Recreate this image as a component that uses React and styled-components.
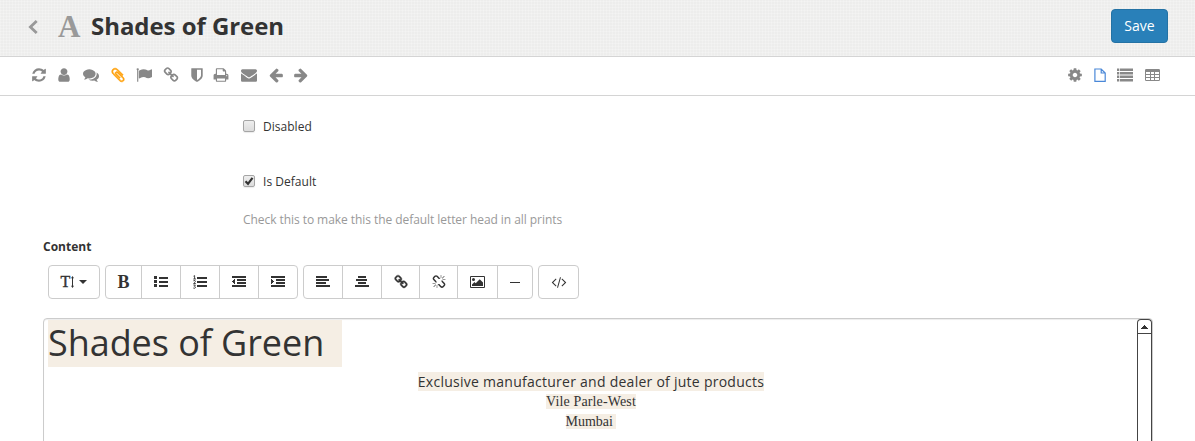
import React from "react";
import styled, { createGlobalStyle } from "styled-components";

const Global = createGlobalStyle`
  * { box-sizing: border-box; }
  body { margin: 0; background: #fff; color: #333; font: 12px/17px "Open Sans", sans-serif; overflow: hidden; }
`;

const paths = {
  refresh: "M1639 1056q0 5-1 7-64 268-268 434.5t-478 166.5q-146 0-282.5-55t-243.5-157l-129 129q-19 19-45 19t-45-19-19-45v-448q0-26 19-45t45-19h448q26 0 45 19t19 45-19 45l-137 137q71 66 161 102t187 36q134 0 250-65t186-179q11-17 53-117 8-23 30-23h192q13 0 22.5 9.5t9.5 22.5zm25-800v448q0 26-19 45t-45 19h-448q-26 0-45-19t-19-45 19-45l138-138q-148-137-349-137-134 0-250 65t-186 179q-11 17-53 117-8 23-30 23h-199q-13 0-22.5-9.5t-9.5-22.5v-7q65-268 270-434.5t480-166.5q146 0 284 55.5t245 156.5l130-129q19-19 45-19t45 19 19 45z",
  user: "M1536 1399q0 109-62.5 187t-150.5 78h-854q-88 0-150.5-78t-62.5-187q0-85 8.5-160.5t31.5-152 58.5-131 94-89 134.5-34.5q131 128 313 128t313-128q76 0 134.5 34.5t94 89 58.5 131 31.5 152 8.5 160.5zm-256-887q0 159-112.5 271.5t-271.5 112.5-271.5-112.5-112.5-271.5 112.5-271.5 271.5-112.5 271.5 112.5 112.5 271.5z",
  comments: "M1408 768q0 139-94 257t-256.5 186.5-353.5 68.5q-86 0-176-16-124 88-278 128-36 9-86 16h-3q-11 0-20.5-8t-11.5-21q-1-3-1-6.5t.5-6.5 2-6l2.5-5 3.5-5.5 4-5 4.5-5 4-4.5q5-6 23-25t26-29.5 22.5-29 25-38.5 20.5-44q-124-72-195-177t-71-224q0-139 94-257t256.5-186.5 353.5-68.5 353.5 68.5 256.5 186.5 94 257zm384 256q0 120-71 224.5t-195 176.5q10 24 20.5 44t25 38.5 22.5 29 26 29.5 23 25q1 1 4 4.5t4.5 5 4 5 3.5 5.5l2.5 5 2 6 .5 6.5-1 6.5q-3 14-13 22t-22 7q-50-7-86-16-154-40-278-128-90 16-176 16-271 0-472-132 58 4 88 4 161 0 309-45t264-129q125-92 192-212t67-254q0-77-23-152 129 71 204 178t75 230z",
  clip: "M1596 1385q0 117-79 196t-196 79q-135 0-235-100l-777-776q-113-115-113-271 0-159 110-270t269-111q158 0 273 113l605 606q10 10 10 22 0 16-30.5 46.5t-46.5 30.5q-13 0-23-10l-606-607q-79-77-181-77-106 0-179 75t-73 181q0 105 76 181l776 777q63 63 145 63 64 0 106-42t42-106q0-82-63-145l-581-581q-26-24-60-24-29 0-48 19t-19 48q0 32 25 59l410 410q10 10 10 22 0 16-31 47t-47 31q-12 0-22-10l-410-410q-63-61-63-149 0-82 57-139t139-57q88 0 149 63l581 581q100 98 100 235z",
  flag: "M320 256q0 72-64 110v1266q0 13-9.5 22.5t-22.5 9.5h-64q-13 0-22.5-9.5t-9.5-22.5v-1266q-64-38-64-110 0-53 37.5-90.5t90.5-37.5 90.5 37.5 37.5 90.5zm1472 64v763q0 25-12.5 38.5t-39.5 27.5q-215 116-369 116-61 0-123.5-22t-108.5-48-115.5-48-142.5-22q-192 0-464 146-17 9-33 9-26 0-45-19t-19-45v-742q0-32 31-55 21-14 79-43 236-120 421-120 107 0 200 29t219 88q38 19 88 19 54 0 117.5-21t110-47 88-47 54.5-21q26 0 45 19t19 45z",
  link: "M1520 1216q0-40-28-68l-208-208q-28-28-68-28-42 0-72 32 3 3 19 18.5t21.5 21.5 15 19 13 25.5 3.5 27.5q0 40-28 68t-68 28q-15 0-27.5-3.5t-25.5-13-19-15-21.5-21.5-18.5-19q-33 31-33 73 0 40 28 68l206 207q27 27 68 27 40 0 68-26l147-146q28-28 28-67zm-703-705q0-40-28-68l-206-207q-28-28-68-28-39 0-68 27l-147 146q-28 28-28 67 0 40 28 68l208 208q27 27 68 27 42 0 72-31-3-3-19-18.5t-21.5-21.5-15-19-13-25.5-3.5-27.5q0-40 28-68t68-28q15 0 27.5 3.5t25.5 13 19 15 21.5 21.5 18.5 19q33-31 33-73zm895 705q0 120-85 203l-147 146q-83 83-203 83-121 0-204-85l-206-207q-83-83-83-203 0-123 88-209l-88-88q-86 88-208 88-120 0-204-84l-208-208q-84-84-84-204t85-203l147-146q83-83 203-83 121 0 204 85l206 207q83 83 83 203 0 123-88 209l88 88q86-88 208-88 120 0 204 84l208 208q84 84 84 204z",
  shield: "M1344 960v-640h-448v1137q119-63 213-137 235-184 235-360zm192-768v768q0 86-33.5 170.5t-83 150-118 127.5-126.5 103-121 77.5-89.5 49.5-42.5 20q-12 6-26 6t-26-6q-16-7-42.5-20t-89.5-49.5-121-77.5-126.5-103-118-127.5-83-150-33.5-170.5v-768q0-26 19-45t45-19h1152q26 0 45 19t19 45z",
  print: "M448 1536h896v-256h-896v256zm0-640h896v-384h-160q-40 0-68-28t-28-68v-160h-640v640zm1152 64q0-26-19-45t-45-19-45 19-19 45 19 45 45 19 45-19 19-45zm128 0v416q0 13-9.5 22.5t-22.5 9.5h-224v160q0 40-28 68t-68 28h-960q-40 0-68-28t-28-68v-160h-224q-13 0-22.5-9.5t-9.5-22.5v-416q0-79 56.5-135.5t135.5-56.5h64v-544q0-40 28-68t68-28h672q40 0 88 20t76 48l152 152q28 28 48 76t20 88v256h64q79 0 135.5 56.5t56.5 135.5z",
  envelope: "M1792 710v794q0 66-47 113t-113 47h-1472q-66 0-113-47t-47-113v-794q44 49 101 87 362 246 497 345 57 42 92.5 65.5t94.5 48 110 24.5h2q51 0 110-24.5t94.5-48 92.5-65.5q170-123 498-345 57-39 100-87zm0-294q0 79-49 151t-122 123q-376 261-468 325-10 7-42.5 31t-54 38-52 32.5-57.5 27-50 9h-2q-23 0-50-9t-57.5-27-52-32.5-54-38-42.5-31q-91-64-262-182.5t-205-142.5q-62-42-117-115.5t-55-136.5q0-78 41.5-130t118.5-52h1472q65 0 112.5 47t47.5 113z",
  arrow: "M1664 896v128q0 53-32.5 90.5t-84.5 37.5h-704l293 294q38 36 38 90t-38 90l-75 76q-37 37-90 37-52 0-91-37l-651-652q-37-37-37-90 0-52 37-91l651-650q38-38 91-38 52 0 90 38l75 74q38 38 38 91t-38 91l-293 293h704q52 0 84.5 37.5t32.5 90.5z",
  cog: "M1152 896q0-106-75-181t-181-75-181 75-75 181 75 181 181 75 181-75 75-181zm512-109v222q0 12-8 23t-20 13l-185 28q-19 54-39 91 35 50 107 138 10 12 10 25t-9 23q-27 37-99 108t-94 71q-12 0-26-9l-138-108q-44 23-91 38-16 136-29 186-7 28-36 28h-222q-14 0-24.5-8.5t-11.5-21.5l-28-184q-49-16-90-37l-141 107q-10 9-25 9-14 0-25-11-126-114-165-168-7-10-7-23 0-12 8-23 15-21 51-66.5t54-70.5q-27-50-41-99l-183-27q-13-2-21-12.5t-8-23.5v-222q0-12 8-23t19-13l186-28q14-46 39-92-40-57-107-138-10-12-10-24 0-10 9-23 26-36 98.5-107.5t94.5-71.5q13 0 26 10l138 107q44-23 91-38 16-136 29-186 7-28 36-28h222q14 0 24.5 8.5t11.5 21.5l28 184q49 16 90 37l142-107q9-9 24-9 13 0 25 10 129 119 165 170 7 8 7 22 0 12-8 23-15 21-51 66.5t-54 70.5q26 50 41 98l183 28q13 2 21 12.5t8 23.5z",
  unlink: "M503 1271l-256 256q-10 9-23 9-12 0-23-9-9-10-9-23t9-23l256-256q10-9 23-9t23 9q9 10 9 23t-9 23zm169 41v320q0 14-9 23t-23 9-23-9-9-23v-320q0-14 9-23t23-9 23 9 9 23zm-224-224q0 14-9 23t-23 9h-320q-14 0-23-9t-9-23 9-23 23-9h320q14 0 23 9t9 23zm1264 128q0 120-85 203l-147 146q-83 83-203 83-121 0-204-85l-334-335q-21-21-42-56l239-18 273 274q28 28 68 27.5t68-27.5l147-146q28-28 28-67 0-40-28-68l-274-275 18-239q35 21 56 42l336 336q84 86 84 204zm-617-724l-239 18-273-274q-28-28-68-28-39 0-68 27l-147 146q-28 28-28 67 0 40 28 68l274 274-18 240q-35-21-56-42l-336-336q-84-86-84-204 0-120 85-203l147-146q83-83 203-83 121 0 204 85l334 335q21 21 42 56zm633 84q0 14-9 23t-23 9h-320q-14 0-23-9t-9-23 9-23 23-9h320q14 0 23 9t9 23zm-544-544v320q0 14-9 23t-23 9-23-9-9-23v-320q0-14 9-23t23-9 23 9 9 23zm407 151l-256 256q-11 9-23 9t-23-9q-9-10-9-23t9-23l256-256q10-9 23-9t23 9q9 10 9 23t-9 23z",
  code: "M681 1399l-50 50q-10 10-23 10t-23-10l-466-466q-10-10-10-23t10-23l466-466q10-10 23-10t23 10l50 50q10 10 10 23t-10 23l-393 393 393 393q10 10 10 23t-10 23zm591-1067l-373 1291q-4 13-15.5 19.5t-23.5 2.5l-62-17q-13-4-19.5-15.5t-2.5-24.5l373-1291q4-13 15.5-19.5t23.5-2.5l62 17q13 4 19.5 15.5t2.5 24.5zm657 651l-466 466q-10 10-23 10t-23-10l-50-50q-10-10-10-23t10-23l393-393-393-393q-10-10-10-23t10-23l50-50q10-10 23-10t23 10l466 466q10 10 10 23t-10 23z",
};

const Svg = styled.svg`
  display: block;
  flex: none;
  fill: currentColor;
  overflow: visible;
  transform: ${(p) => (p.$flip ? "scaleX(-1)" : "none")};
`;

const Glyph = ({ name, size = 16, flip, w = 1792, weight = 0 }) => (
  <Svg width={(size * w) / 1792} height={size} viewBox={`0 0 ${w} 1792`} $flip={flip}>
    <path d={paths[name]} stroke="currentColor" strokeWidth={weight} />
  </Svg>
);

/* Icons made of crisp horizontal and vertical bars, on a 14px or 16px grid. */
const Bars = ({ d, w = 14, h = 12 }) => (
  <Svg width={w} height={h} viewBox={`0 0 ${w} ${h}`} shapeRendering="crispEdges">
    <path d={d} />
  </Svg>
);

const Header = styled.header`
  height: 57px;
  display: flex;
  align-items: center;
  padding: 0 27px 4px 28px;
  border-bottom: 1px solid #d4d4d4;
  background-color: #ededec;
  background-image:
    repeating-linear-gradient(90deg, rgba(255, 255, 255, 0.2) 0 1px, transparent 1px 3px),
    repeating-linear-gradient(0deg, rgba(255, 255, 255, 0.2) 0 1px, transparent 1px 3px);
`;
const Back = styled.span`
  width: 30px;
  color: #999;
`;
const TypeMark = styled.span`
  width: 33px;
  padding-top: 2px;
  color: #999;
  font: bold 31px/40px "Liberation Serif", serif;
`;
const Title = styled.h1`
  flex: 1;
  margin: 0;
  font-size: 24px;
  line-height: 40px;
  font-weight: 700;
  letter-spacing: -0.05px;
`;
const Save = styled.button`
  width: 57px;
  height: 34px;
  padding: 0;
  border: 1px solid #2472a4;
  border-radius: 4px;
  background: #2980b9;
  color: #fff;
  font: 14px/20px "Open Sans", sans-serif;
`;

const Toolbar = styled.nav`
  height: 39px;
  display: flex;
  justify-content: space-between;
  padding: 0 28px 0 25px;
  border-bottom: 1px solid #d4d4d4;
`;
const Tools = styled.div`
  display: flex;
`;
const Tool = styled.span`
  width: ${(p) => p.$w}px;
  height: 36px;
  display: flex;
  align-items: center;
  justify-content: center;
  color: ${(p) => p.$color || "#888"};
`;

const Form = styled.main`
  padding: 22px 42px 0 43px;
`;
const Field = styled.label`
  display: flex;
  align-items: center;
  gap: 8px;
  height: 17px;
  margin: 0 0 ${(p) => p.$gap}px 200px;
  letter-spacing: 0.03px;
`;
const Check = styled.span`
  width: 12px;
  height: 12px;
  margin-bottom: 1px;
  display: flex;
  border: 1px solid #a5a5a5;
  border-radius: 2px;
  background: linear-gradient(#eee, #dcdcdc);
  box-shadow: 0 1px 1px rgba(0, 0, 0, 0.08);
  color: #333;
`;
const Help = styled.p`
  margin: 0 0 10px 200px;
  color: #999;
  letter-spacing: -0.06px;
`;
const Caption = styled.div`
  font-weight: 700;
  margin-bottom: 10px;
`;

const EditorBar = styled.div`
  display: flex;
  gap: 5px;
  padding-left: 5px;
`;
const Group = styled.div`
  display: flex;
  height: 34px;
  border: 1px solid #ccc;
  border-radius: 4px;
`;
const Button = styled.span`
  width: ${(p) => p.$w}px;
  display: flex;
  align-items: center;
  justify-content: center;
  color: #333;
  & + & { border-left: 1px solid #ccc; }
`;
const Letter = styled.span`
  font: ${(p) => (p.$bold ? "bold 18px" : "bold 16px")}/32px "Liberation Serif", serif;
  font-weight: ${(p) => (p.$bold ? 700 : 400)};
  -webkit-text-stroke: ${(p) => (p.$bold ? 0 : 0.4)}px #333;
`;

const Editor = styled.div`
  display: flex;
  height: 140px;
  margin-top: 19px;
  border: 1px solid #ccc;
  border-radius: 4px;
  box-shadow: inset 0 1px 1px rgba(0, 0, 0, 0.075);
`;
const Content = styled.div`
  flex: 1;
  padding: 1px 3px 1px 4px;
`;
const Mark = styled.span`
  background: #f5eee4;
`;
const Heading = styled.div`
  width: fit-content;
  height: 47px;
  padding-right: 18px;
  background: #f5eee4;
  font-size: 36px;
  line-height: 46px;
  letter-spacing: -0.06px;
`;
const Line = styled.div`
  text-align: center;
  white-space: pre;
  font: 14px/20px ${(p) => (p.$serif ? '"Liberation Serif", serif' : '"Open Sans", sans-serif')};
  letter-spacing: ${(p) => p.$track || 0}px;
  &:nth-child(2) { margin-top: 5px; }
`;
const Scroll = styled.div`
  width: 15px;
  border: 1px solid #444;
  border-radius: 4px 4px 0 0;
  border-bottom: 0;
`;
const ScrollUp = styled.div`
  height: 14px;
  display: flex;
  align-items: center;
  justify-content: center;
  border-bottom: 1px solid #444;
`;

export default function App() {
  return (
    <>
      <Global />
      <Header>
        <Back>
          <Svg width="10" height="15" viewBox="0 0 10 15">
            <path d="M8.7 2L2.4 8L8.7 14" fill="none" stroke="currentColor" strokeWidth="2.8" />
          </Svg>
        </Back>
        <TypeMark>A</TypeMark>
        <Title>Shades of Green</Title>
        <Save>Save</Save>
      </Header>
      <Toolbar>
        <Tools>
          <Tool $w={28}><Glyph name="refresh" /></Tool>
          <Tool $w={22}><Glyph name="user" /></Tool>
          <Tool $w={31}><Glyph name="comments" /></Tool>
          <Tool $w={23} $color="#ffa00a"><Glyph name="clip" weight={70} /></Tool>
          <Tool $w={30}><Glyph name="flag" /></Tool>
          <Tool $w={24}><Glyph name="link" /></Tool>
          <Tool $w={27}><Glyph name="shield" /></Tool>
          <Tool $w={22}><Glyph name="print" /></Tool>
          <Tool $w={33}><Glyph name="envelope" /></Tool>
          <Tool $w={22}><Glyph name="arrow" /></Tool>
          <Tool $w={28}><Glyph name="arrow" flip /></Tool>
        </Tools>
        <Tools>
          <Tool $w={25}><Glyph name="cog" /></Tool>
          <Tool $w={25} $color="#4a88d8">
            <Svg width="12" height="14" viewBox="0 0 12 14">
              <path d="M.9 1H7.2L11.2 5V13.4H.9ZM7.2 1V5H11.2" fill="none" stroke="currentColor" strokeWidth="1.2" />
            </Svg>
          </Tool>
          <Tool $w={26}>
            <Svg width="16" height="14" viewBox="0 0 16 14">
              <path d="M0 .6h2.3V3H0zM3 .6h13V3H3zM0 4h2.3v2.4H0zM3 4h13v2.4H3zM0 7.5h2.3v2.4H0zM3 7.5h13v2.4H3zM0 11h2.3v2.4H0zM3 11h13v2.4H3z" />
            </Svg>
          </Tool>
          <Tool $w={29}>
            <Svg width="15" height="12" viewBox="0 0 15 12">
              <path fillRule="evenodd" d="M1.3 0H13.7Q15 0 15 1.3V10.7Q15 12 13.7 12H1.3Q0 12 0 10.7V1.3Q0 0 1.3 0ZM1 3V5H5V3ZM6 3V5H9V3ZM10 3V5H14V3ZM1 6V8H5V6ZM6 6V8H9V6ZM10 6V8H14V6ZM1 9V11H5V9ZM6 9V11H9V9ZM10 9V11H14V9Z" />
            </Svg>
          </Tool>
        </Tools>
      </Toolbar>
      <Form>
        <Field $gap={38}><Check />Disabled</Field>
        <Field $gap={21}>
          <Check>
            <Svg width="10" height="10" viewBox="0 0 10 10">
              <path d="M1.5 5.2L4 7.8L8.5 1.8" fill="none" stroke="currentColor" strokeWidth="2.2" />
            </Svg>
          </Check>
          Is Default
        </Field>
        <Help>Check this to make this the default letter head in all prints</Help>
        <Caption>Content</Caption>
        <EditorBar>
          <Group>
            <Button $w={50}>
              <Letter>T</Letter>
              <Svg width="5" height="12" viewBox="0 0 5 12">
                <path d="M2 1h1v10H2zM2.5 0L4 2.2H1zM2.5 12L1 9.8H4z" />
              </Svg>
              <Svg width="12" height="4" viewBox="0 0 12 4"><path d="M4 0h8L8 4z" /></Svg>
            </Button>
          </Group>
          <Group>
            <Button $w={35}><Letter $bold>B</Letter></Button>
            <Button $w={39}><Bars d="M0 0h3v3H0zM5 1h9v2H5zM0 4h3v3H0zM5 5h9v2H5zM0 8h3v3H0zM5 9h9v2H5z" /></Button>
            <Button $w={39}>
              <Svg width="14" height="14" viewBox="0 0 14 14">
                <path d="M4 2h10v2H4zM4 6h10v2H4zM4 10h10v2H4z" />
                <path d="M.5 1.2L1.6.6V4M.3 4H3M.4 5.8Q2.5 4.8 2.4 6.3Q2.2 7.4.6 8.5H2.8M.4 10H2.4L1.4 11.3Q2.8 11.6 2.3 12.8Q1.6 13.8.3 13" fill="none" stroke="currentColor" strokeWidth=".9" />
              </Svg>
            </Button>
            <Button $w={39}><Bars d="M0 0h14v2H0zM5 3h9v2H5zM5 6h9v2H5zM0 9h14v2H0zM3 3v5H2V7H1V6H0V5H1V4H2V3z" /></Button>
            <Button $w={39}><Bars d="M0 0h14v2H0zM5 3h9v2H5zM5 6h9v2H5zM0 9h14v2H0zM0 3h1v1h1v1h1v1H2v1H1v1H0z" /></Button>
          </Group>
          <Group>
            <Button $w={38}><Bars d="M0 0h11v2H0zM0 3h13v2H0zM0 6h10v2H0zM0 9h14v2H0z" /></Button>
            <Button $w={39}><Bars d="M3 0h8v2H3zM1 3h11v2H1zM3 6h8v2H3zM0 9h14v2H0z" /></Button>
            <Button $w={38}><Glyph name="link" size={14} weight={50} /></Button>
            <Button $w={38}><Glyph name="unlink" size={14} /></Button>
            <Button $w={40}>
              <Svg width="15" height="12" viewBox="0 0 15 12">
                <path fillRule="evenodd" d="M1 0H14Q15 0 15 1V11Q15 12 14 12H1Q0 12 0 11V1Q0 0 1 0ZM1 1V11H14V1ZM2 10V8.5L4.5 6L5.7 7.2L9.7 3.2L13 6.5V10Z" />
                <circle cx="3.5" cy="3.5" r="1.5" />
              </Svg>
            </Button>
            <Button $w={35}><Bars w={10} h={1} d="M0 0h10v1H0z" /></Button>
          </Group>
          <Group>
            <Button $w={39}><Glyph name="code" size={14} w={2048} /></Button>
          </Group>
        </EditorBar>
        <Editor>
          <Content>
            <Heading>Shades of Green</Heading>
            <Line $track={0.26}><Mark>Exclusive manufacturer and dealer of jute products</Mark></Line>
            <Line $serif $track={0.14}><Mark>Vile Parle-West</Mark></Line>
            <Line $serif><Mark>{"Mumbai "}</Mark></Line>
          </Content>
          <Scroll>
            <ScrollUp>
              <Bars w={7} h={4} d="M3 0h1v1h1v1h1v1h1v1H0V3h1V2h1V1h1z" />
            </ScrollUp>
          </Scroll>
        </Editor>
      </Form>
    </>
  );
}
